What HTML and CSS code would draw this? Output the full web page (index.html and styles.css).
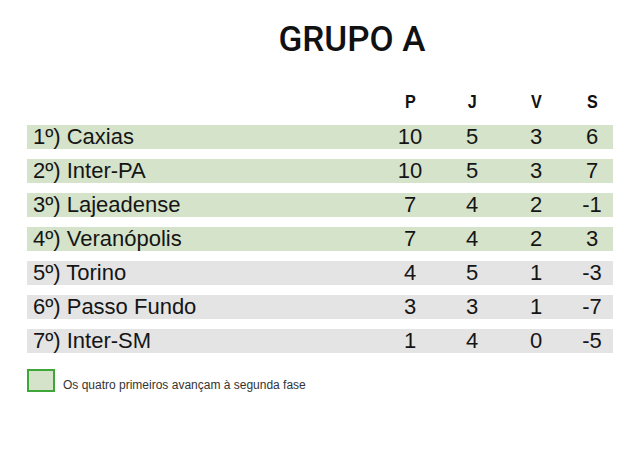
FILE: index.html
```html
<!DOCTYPE html>
<html lang="pt">
<head>
<meta charset="utf-8">
<title>Grupo A</title>
<link rel="stylesheet" href="styles.css">
</head>
<body>
<main class="page">
  <h1 class="title">GRUPO A</h1>
  <div class="table">
    <div class="row head">
      <span></span><span class="num"><span class="narrow">P</span></span><span class="num"><span class="narrow">J</span></span><span class="num"><span class="narrow">V</span></span><span class="num"><span class="narrow">S</span></span>
    </div>
    <div class="row green"><span class="team">1º) Caxias</span><span class="num">10</span><span class="num">5</span><span class="num">3</span><span class="num">6</span></div>
    <div class="row green"><span class="team">2º) Inter-PA</span><span class="num">10</span><span class="num">5</span><span class="num">3</span><span class="num">7</span></div>
    <div class="row green"><span class="team">3º) Lajeadense</span><span class="num">7</span><span class="num">4</span><span class="num">2</span><span class="num">-1</span></div>
    <div class="row green"><span class="team">4º) Veranópolis</span><span class="num">7</span><span class="num">4</span><span class="num">2</span><span class="num">3</span></div>
    <div class="row gray"><span class="team">5º) Torino</span><span class="num">4</span><span class="num">5</span><span class="num">1</span><span class="num">-3</span></div>
    <div class="row gray"><span class="team">6º) Passo Fundo</span><span class="num">3</span><span class="num">3</span><span class="num">1</span><span class="num">-7</span></div>
    <div class="row gray"><span class="team">7º) Inter-SM</span><span class="num">1</span><span class="num">4</span><span class="num">0</span><span class="num">-5</span></div>
  </div>
  <div class="legend">
    <span class="swatch"></span>
    <span class="legend-text">Os quatro primeiros avançam à segunda fase</span>
  </div>
</main>
</body>
</html>
```
FILE: styles.css
```css
* { box-sizing: border-box; }
html, body { margin: 0; padding: 0; background: #ffffff; }
body {
  width: 640px;
  height: 462px;
  font-family: "Liberation Sans", Arial, sans-serif;
  color: #151515;
}
.page {
  display: flex;
  flex-direction: column;
  padding: 22px 27px 0 27px;
}
.narrow {
  display: inline-block;
  transform: scaleX(0.85);
  transform-origin: center;
}
.title {
  margin: 0;
  padding-left: 64px;
  text-align: center;
  font-family: Roboto, "Liberation Sans", sans-serif;
  font-weight: 500;
  font-size: 35px;
  line-height: 35px;
  color: #111111;
}
.table {
  display: flex;
  flex-direction: column;
  gap: 10px;
  margin-top: 35px;
}
.row {
  display: grid;
  grid-template-columns: 1fr 66px 58px 70px 42px;
  align-items: center;
  padding-left: 6px;
  height: 24px;
  font-size: 22px;
  line-height: 24px;
}
.row.head {
  height: 20px;
  line-height: 20px;
  margin-bottom: 3px;
  font-weight: bold;
  font-size: 19px;
  color: #111111;
}
.green { background: #d4e3c9; }
.gray { background: #e4e4e4; }
.team { white-space: nowrap; }
.num { text-align: center; }
.legend {
  display: flex;
  align-items: flex-end;
  gap: 8px;
  margin-top: 16px;
}
.swatch {
  width: 28px;
  height: 23px;
  border: 2px solid #3fa63a;
  background: #d4e3c9;
}
.legend-text {
  font-size: 12px;
  line-height: 14px;
  color: #333333;
}
```
